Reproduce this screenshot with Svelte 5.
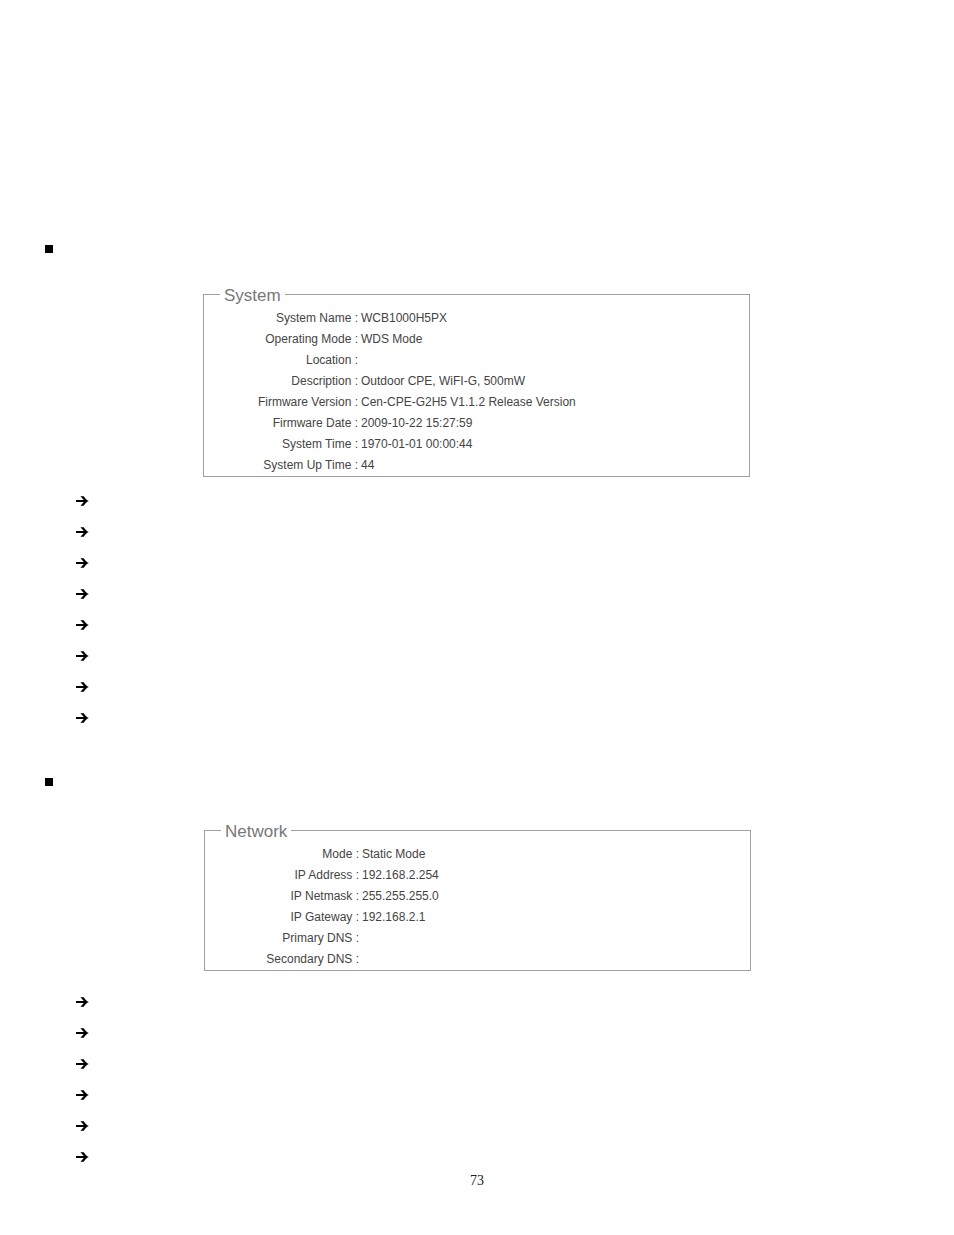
<script lang="ts">
  interface Row {
    label: string;
    value: string;
  }

  interface Section {
    id: string;
    title: string;
    rows: Row[];
  }

  const sections: Section[] = [
    {
      id: "system",
      title: "System",
      rows: [
        {label: "System Name", value: "WCB1000H5PX"},
        {label: "Operating Mode", value: "WDS Mode"},
        {label: "Location", value: ""},
        {label: "Description", value: "Outdoor CPE, WiFI-G, 500mW"},
        {label: "Firmware Version", value: "Cen-CPE-G2H5 V1.1.2 Release Version"},
        {label: "Firmware Date", value: "2009-10-22 15:27:59"},
        {label: "System Time", value: "1970-01-01 00:00:44"},
        {label: "System Up Time", value: "44"}
      ]
    },
    {
      id: "network",
      title: "Network",
      rows: [
        {label: "Mode", value: "Static Mode"},
        {label: "IP Address", value: "192.168.2.254"},
        {label: "IP Netmask", value: "255.255.255.0"},
        {label: "IP Gateway", value: "192.168.2.1"},
        {label: "Primary DNS", value: ""},
        {label: "Secondary DNS", value: ""}
      ]
    }
  ];

  const pageNumber = 73;
</script>

<main class="page">
  {#each sections as section}
    <section class="section {section.id}">
      <div class="bullet"></div>

      <fieldset>
        <legend>{section.title}</legend>
        <dl>
          {#each section.rows as row}
            <dt>{row.label} :</dt>
            <dd>{row.value}</dd>
          {/each}
        </dl>
      </fieldset>

      <!-- one arrow for each row in the box -->
      <ul class="notes">
        {#each section.rows as row}
          <li>
            <svg width="13" height="11" viewBox="0 0 13 11" aria-hidden="true">
              <path d="M0 3.9H7.8L4.4 0.2H7.8C9 2.4 10.6 4 12.8 5C10.6 6 9 7.6 7.8 9.8H4.4L7.8 6.1H0Z" />
            </svg>
          </li>
        {/each}
      </ul>
    </section>
  {/each}

  <footer>{pageNumber}</footer>
</main>

<style>
  :global(body) {
    margin: 0;
    background: #fff;
  }

  .page {
    padding: 245px 0 44px;
    font-family: "Liberation Sans", Arial, sans-serif;
  }

  .section + .section {
    margin-top: 44px;
  }

  .bullet {
    width: 8px;
    height: 8px;
    margin-left: 45px;
    background: #000;
  }

  fieldset {
    min-width: 0;
    margin: 29px 204px 0 203px;
    padding: 0 0 0 16px;
    border: 1px solid #a0a0a0;
  }

  .network fieldset {
    margin: 32px 203px 0 204px;
  }

  legend {
    padding: 4px 4px 0;
    color: #777;
    font-size: 17px;
    line-height: 20px;
  }

  dl {
    display: grid;
    grid-template-columns: 138px 1fr;
    column-gap: 3px;
    margin: 2px 0 0;
    color: #444;
    font-size: 12px;
    line-height: 21px;
  }

  dt {
    text-align: right;
    white-space: nowrap;
  }

  dd {
    min-height: 21px;
    margin: 0;
  }

  .notes {
    margin: 9px 0 0 76px;
    padding: 0;
    list-style: none;
  }

  .network .notes {
    margin-top: 16px;
  }

  .notes li {
    display: flex;
    align-items: center;
    height: 31px;
  }

  footer {
    color: #222;
    font-family: "Liberation Serif", serif;
    font-size: 14px;
    line-height: 16px;
    text-align: center;
  }
</style>
